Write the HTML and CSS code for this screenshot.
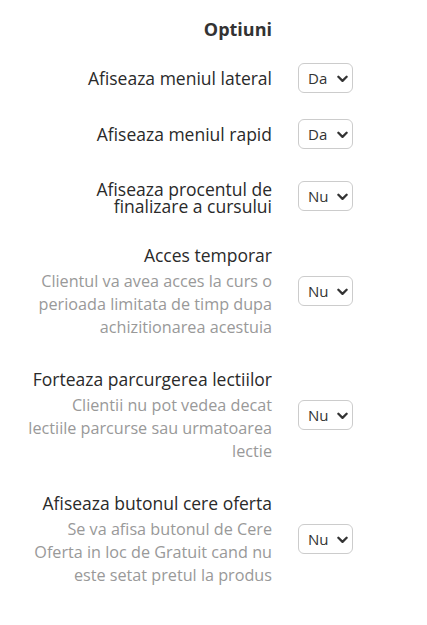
FILE: index.html
```html
<!DOCTYPE html>
<html>
	<head>
		<meta charset="UTF-8">
		<title>Optiuni</title>
		<link rel="stylesheet" href="styles.css">
	</head>
	<body>
		<div class="options">
			<h3 class="options-title">Optiuni</h3>

			<div class="opt-row first">
				<div class="opt-text">
					<label class="opt-label">Afiseaza meniul lateral</label>
				</div>
				<div class="select-box">
					<select><option>Da</option><option>Nu</option></select>
					<svg class="chev" viewBox="0 0 12 8"><path d="M1.5 1.5 L6 6 L10.5 1.5"/></svg>
				</div>
			</div>

			<div class="opt-row">
				<div class="opt-text">
					<label class="opt-label">Afiseaza meniul rapid</label>
				</div>
				<div class="select-box">
					<select><option>Da</option><option>Nu</option></select>
					<svg class="chev" viewBox="0 0 12 8"><path d="M1.5 1.5 L6 6 L10.5 1.5"/></svg>
				</div>
			</div>

			<div class="opt-row tall">
				<div class="opt-text">
					<label class="opt-label">Afiseaza procentul de finalizare a cursului</label>
				</div>
				<div class="select-box">
					<select><option>Nu</option><option>Da</option></select>
					<svg class="chev" viewBox="0 0 12 8"><path d="M1.5 1.5 L6 6 L10.5 1.5"/></svg>
				</div>
			</div>

			<div class="opt-row tall">
				<div class="opt-text">
					<label class="opt-label">Acces temporar</label>
					<p class="opt-desc">Clientul va avea acces la curs o perioada limitata de timp dupa achizitionarea acestuia</p>
				</div>
				<div class="select-box">
					<select><option>Nu</option><option>Da</option></select>
					<svg class="chev" viewBox="0 0 12 8"><path d="M1.5 1.5 L6 6 L10.5 1.5"/></svg>
				</div>
			</div>

			<div class="opt-row tall">
				<div class="opt-text">
					<label class="opt-label">Forteaza parcurgerea lectiilor</label>
					<p class="opt-desc">Clientii nu pot vedea decat lectiile parcurse sau urmatoarea lectie</p>
				</div>
				<div class="select-box">
					<select><option>Nu</option><option>Da</option></select>
					<svg class="chev" viewBox="0 0 12 8"><path d="M1.5 1.5 L6 6 L10.5 1.5"/></svg>
				</div>
			</div>

			<div class="opt-row tall">
				<div class="opt-text">
					<label class="opt-label">Afiseaza butonul cere oferta</label>
					<p class="opt-desc">Se va afisa butonul de Cere Oferta in loc de Gratuit cand nu este setat pretul la produs</p>
				</div>
				<div class="select-box">
					<select><option>Nu</option><option>Da</option></select>
					<svg class="chev" viewBox="0 0 12 8"><path d="M1.5 1.5 L6 6 L10.5 1.5"/></svg>
				</div>
			</div>
		</div>
	</body>
</html>
```

FILE: styles.css
```css
body {
	margin: 0;
	background-color: #fff;
	font-family: "Open Sans", "Liberation Sans", sans-serif;
	color: #333;
}

.options {
	width: 325px;
	padding: 20px 0 0 28px;
}

.options-title {
	width: 244px;
	margin: 0 0 25px 0;
	text-align: right;
	font-size: 18px;
	line-height: 18px;
	font-weight: 700;
	color: #333;
}

.opt-row {
	display: flex;
	align-items: center;
	gap: 26px;
	margin-bottom: 28px;
}

.opt-row.first {
	margin-bottom: 26px;
}

.opt-text {
	width: 244px;
	text-align: right;
}

.opt-row.tall .opt-text {
	padding-top: 4px;
}

.opt-label {
	display: block;
	font-size: 17.5px;
	line-height: 17px;
	color: #2a2a2a;
}

.opt-desc {
	margin: 6px 0 0 0;
	font-size: 16.2px;
	line-height: 23px;
	color: #999;
}

.select-box {
	position: relative;
	width: 55px;
	height: 30px;
}

.select-box select {
	-webkit-appearance: none;
	appearance: none;
	width: 55px;
	height: 30px;
	padding: 0 0 0 9px;
	border: 1px solid #ccc;
	border-radius: 6px;
	background-color: #fff;
	font-family: "Open Sans", "Liberation Sans", sans-serif;
	font-size: 15px;
	color: #333;
}

.chev {
	position: absolute;
	top: 12px;
	right: 5px;
	width: 11px;
	height: 8px;
	pointer-events: none;
}

.chev path {
	fill: none;
	stroke: #333;
	stroke-width: 2.5;
	stroke-linecap: round;
	stroke-linejoin: round;
}
```
